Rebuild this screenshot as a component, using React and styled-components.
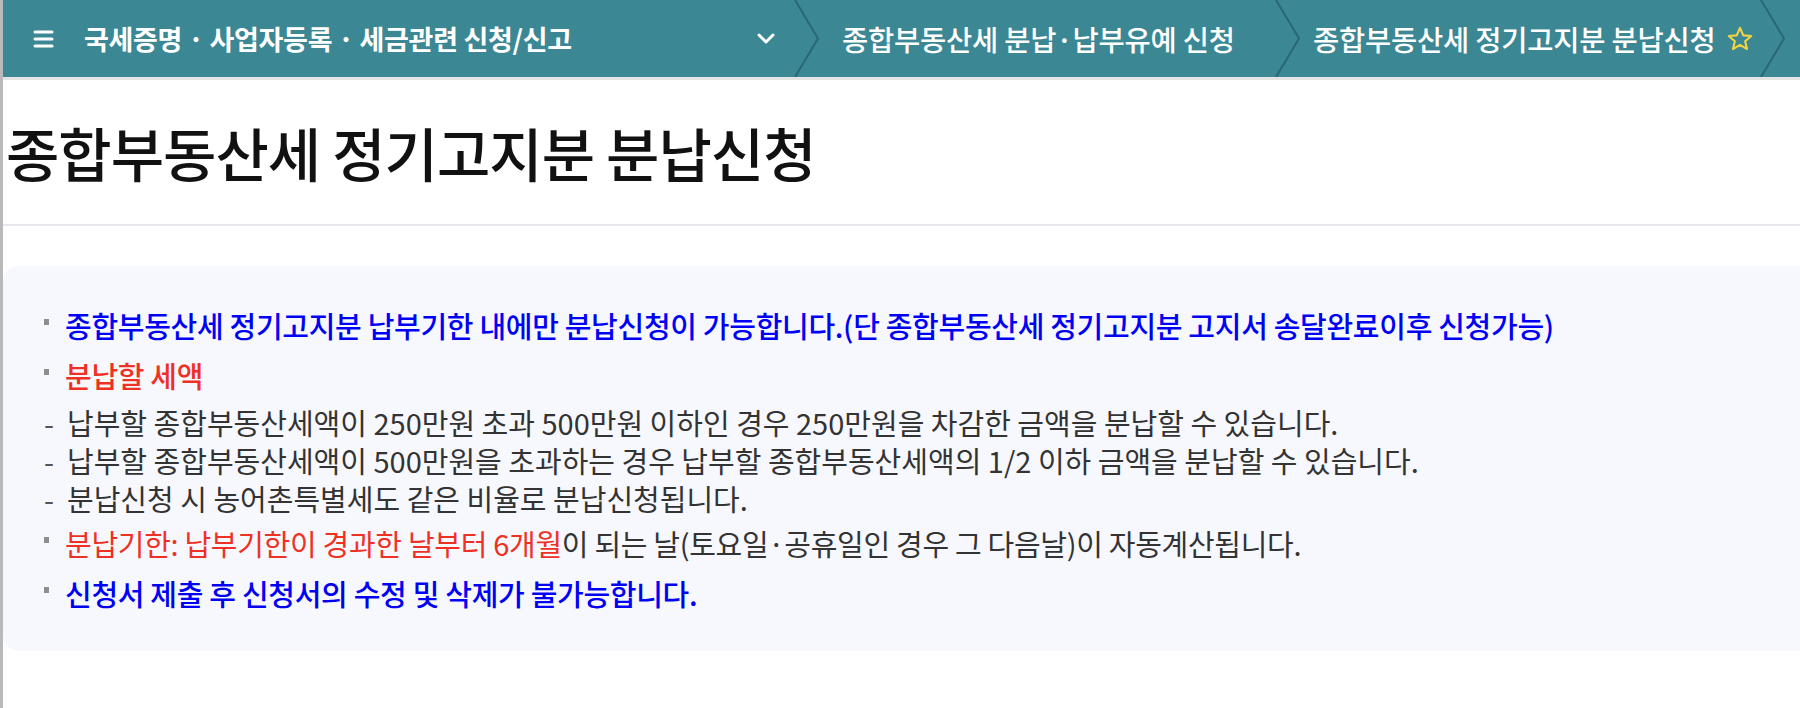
import styled, { createGlobalStyle } from 'styled-components';

const GlobalStyle = createGlobalStyle`
  * {
    box-sizing: border-box;
  }
  body {
    margin: 0;
    background: #ffffff;
    font-family: 'Noto Sans CJK KR', 'Noto Sans', sans-serif;
  }
  ul {
    margin: 0;
    padding: 0;
    list-style: none;
  }
`;

const Page = styled.div`
  min-height: 708px;
  border-left: 3px solid #b9b9b9;
  overflow: hidden;
`;

const Header = styled.header`
  display: flex;
  align-items: stretch;
  height: 80px;
  background: #3c8794;
  border-bottom: 3px solid #e4e4e4;
`;

const MenuSegment = styled.div`
  display: flex;
  align-items: center;
  width: 789px;
  padding: 0 17px 0 30px;
`;

const MenuTitle = styled.h2`
  margin: 0 0 0 30px;
  font-size: 27px;
  font-weight: 700;
  letter-spacing: -0.3px;
  color: #ffffff;
  white-space: nowrap;
`;

const MenuToggle = styled.span`
  display: flex;
  margin-left: auto;
`;

const Crumb = styled.div`
  display: flex;
  align-items: center;
  padding: ${(props) => props.$pad};
  font-size: 28.5px;
  font-weight: 500;
  letter-spacing: -0.2px;
  color: #ffffff;
  white-space: nowrap;
`;

const FavStar = styled.span`
  display: flex;
  margin-left: 10px;
`;

const TitleBar = styled.div`
  display: flex;
  align-items: center;
  height: 146px;
  padding-left: 3px;
  border-bottom: 2px solid #e7e7ed;
`;

const PageTitle = styled.h1`
  margin: 0;
  font-size: 58px;
  font-weight: 500;
  letter-spacing: -1px;
  color: #111111;
`;

const InfoBox = styled.section`
  margin-top: 40px;
  padding: 40px 0 39px 41px;
  background: #f7f8fd;
  border-radius: 16px 0 0 16px;
`;

const NoticeList = styled.ul`
  display: flex;
  flex-direction: column;
  gap: 12px;
`;

const Notice = styled.li`
  display: flex;
  flex-direction: column;
  font-size: 29px;
  line-height: 38px;
  font-weight: ${(props) => (props.$strong ? 500 : 400)};
  color: ${(props) => props.$color || '#333333'};
  letter-spacing: -0.3px;
`;

const NoticeLine = styled.div`
  display: flex;
  align-items: center;
  white-space: nowrap;
`;

const Square = styled.span`
  flex: none;
  width: 5px;
  height: 6px;
  margin: 0 16px 6px 0;
  background: #8e8e8e;
`;

const SubList = styled.ul`
  margin: 9px 0 -5px;
`;

const SubItem = styled.li`
  display: flex;
  font-size: 29px;
  line-height: 38px;
  font-weight: 400;
  color: #333333;
  letter-spacing: 0;
  white-space: nowrap;
`;

const Dash = styled.span`
  flex: none;
  width: 23px;
  color: #555555;
`;

const Red = styled.span`
  color: #ee3124;
`;

const MenuIcon = () => (
  <svg width="21" height="20" viewBox="0 0 21 20">
    <g stroke="#ffffff" strokeWidth="3" strokeLinecap="round">
      <line x1="2" y1="3" x2="19" y2="3" />
      <line x1="2" y1="10" x2="19" y2="10" />
      <line x1="2" y1="17" x2="19" y2="17" />
    </g>
  </svg>
);

const ChevronDown = () => (
  <svg width="18" height="12" viewBox="0 0 18 12">
    <polyline
      points="2,2 9,9 16,2"
      fill="none"
      stroke="#ffffff"
      strokeWidth="3"
      strokeLinecap="round"
      strokeLinejoin="round"
    />
  </svg>
);

const Divider = () => (
  <svg width="28" height="77" viewBox="0 0 28 77" style={{ flex: 'none' }}>
    <polyline
      points="3,0 26,38.5 3,77"
      fill="none"
      stroke="#2b6674"
      strokeWidth="2"
    />
  </svg>
);

const StarIcon = () => (
  <svg width="28" height="28" viewBox="0 0 24 24">
    <polygon
      points="12,2.5 14.8,8.9 21.6,9.4 16.4,13.9 18,20.6 12,17 6,20.6 7.6,13.9 2.4,9.4 9.2,8.9"
      fill="none"
      stroke="#f2d443"
      strokeWidth="1.8"
      strokeLinejoin="round"
    />
  </svg>
);

const App = () => (
  <>
    <GlobalStyle />
    <Page>
      <Header>
        <MenuSegment>
          <MenuIcon />
          <MenuTitle>국세증명 · 사업자등록 · 세금관련 신청/신고</MenuTitle>
          <MenuToggle>
            <ChevronDown />
          </MenuToggle>
        </MenuSegment>
        <Divider />
        <Crumb $pad="0 38px 0 22px">종합부동산세 분납·납부유예 신청</Crumb>
        <Divider />
        <Crumb $pad="0 4px 0 12px">
          종합부동산세 정기고지분 분납신청
          <FavStar>
            <StarIcon />
          </FavStar>
        </Crumb>
        <Divider />
      </Header>

      <TitleBar>
        <PageTitle>종합부동산세 정기고지분 분납신청</PageTitle>
      </TitleBar>

      <InfoBox>
        <NoticeList>
          <Notice $color="#0000f5" $strong>
            <NoticeLine>
              <Square />
              종합부동산세 정기고지분 납부기한 내에만 분납신청이 가능합니다.(단 종합부동산세 정기고지분 고지서 송달완료이후 신청가능)
            </NoticeLine>
          </Notice>
          <Notice $color="#ee3124" $strong>
            <NoticeLine>
              <Square />
              분납할 세액
            </NoticeLine>
            <SubList>
              <SubItem>
                <Dash>-</Dash>
                납부할 종합부동산세액이 250만원 초과 500만원 이하인 경우 250만원을 차감한 금액을 분납할 수 있습니다.
              </SubItem>
              <SubItem>
                <Dash>-</Dash>
                납부할 종합부동산세액이 500만원을 초과하는 경우 납부할 종합부동산세액의 1/2 이하 금액을 분납할 수 있습니다.
              </SubItem>
              <SubItem>
                <Dash>-</Dash>
                분납신청 시 농어촌특별세도 같은 비율로 분납신청됩니다.
              </SubItem>
            </SubList>
          </Notice>
          <Notice>
            <NoticeLine>
              <Square />
              <Red>분납기한: 납부기한이 경과한 날부터 6개월</Red>이 되는 날(토요일·공휴일인 경우 그 다음날)이 자동계산됩니다.
            </NoticeLine>
          </Notice>
          <Notice $color="#0000f5" $strong>
            <NoticeLine>
              <Square />
              신청서 제출 후 신청서의 수정 및 삭제가 불가능합니다.
            </NoticeLine>
          </Notice>
        </NoticeList>
      </InfoBox>
    </Page>
  </>
);

export default App;
